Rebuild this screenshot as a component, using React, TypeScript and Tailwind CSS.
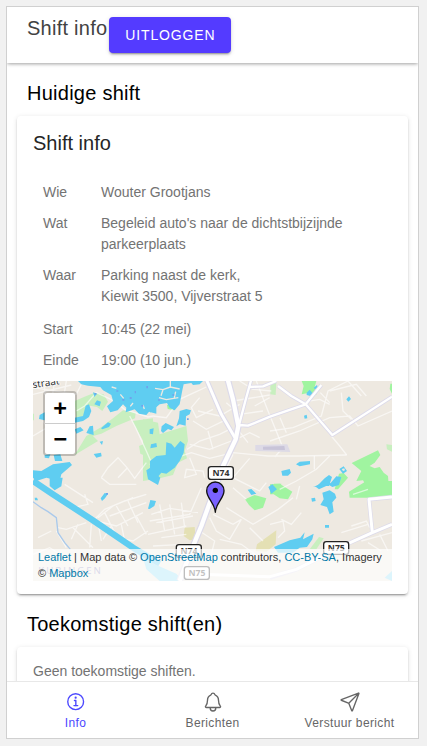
import React from "react";
import {
  IoInformationCircleOutline,
  IoNotificationsOutline,
  IoPaperPlaneOutline,
} from "react-icons/io5";

const rows: { label: string; lines: string[]; tall?: boolean }[] = [
  { label: "Wie", lines: ["Wouter Grootjans"] },
  { label: "Wat", lines: ["Begeleid auto's naar de dichtstbijzijnde parkeerplaats"] },
  { label: "Waar", lines: ["Parking naast de kerk,", "Kiewit 3500, Vijverstraat 5"], tall: true },
  { label: "Start", lines: ["10:45 (22 mei)"] },
  { label: "Einde", lines: ["19:00 (10 jun.)"] },
];

function RoadSign({ x, y, label }: { x: number; y: number; label: string }) {
  return (
    <g>
      <rect x={x} y={y} width="75" height="38" rx="8" fill="#fff" stroke="#222" strokeWidth="4" />
      <text
        x={x + 38}
        y={y + 28}
        textAnchor="middle"
        fontFamily="'Open Sans', 'Noto Sans', sans-serif"
        fontSize="26"
        fontWeight="700"
        fill="#333"
      >
        {label}
      </text>
    </g>
  );
}

function MapDrawing() {
  return (
    <svg
      viewBox="0 0 1077 600"
      preserveAspectRatio="xMidYMid slice"
      className="block h-full w-full"
      aria-hidden="true"
    >
      <rect width="1077" height="600" fill="#eee9e1" />

      {/* Parks and woods */}
      <g fill="#c8efbf">
        <path d="M125 60L160 45L185 35L212 40L225 62L208 90L192 78L170 74L150 105L130 115Z" />
        <path d="M125 222L160 165L205 138L240 112L270 88L308 96L306 112L250 135L205 158L180 165L195 180L125 222Z" />
        <path d="M298 120L360 112L360 235L322 218L318 195L335 188Z" />
        <path d="M0 98H3V118H0Z" />
        <path d="M330 115L375 125L380 160L460 135L465 180L455 210L462 232L435 245L420 282L380 292L330 300Z" />
        <path d="M712 10L730 5L728 42L712 40Z" />
        <path d="M1060 190L1077 192V212L1062 205Z" />
        <path d="M830 505L858 468L872 472L850 505Z" />
      </g>
      <g fill="#a0f4a0">
        <path d="M806 0L850 0L845 18L850 42L830 35L806 40L812 15Z" />
        <path d="M956 246L1035 208L1042 222L1025 245L1010 255L1025 262L1040 258L1052 275L1065 285L1068 325H1005L990 298L970 300L985 270Z" />
        <path d="M948 332L1000 300H1077V345L1015 350L950 350Z" />
        <path d="M918 278L932 276L945 290L915 325H905L912 300Z" />
        <path d="M636 355L665 342L700 352L690 380L665 388L648 372Z" />
        <path d="M711 310L740 308L778 332L765 355L740 352L722 340H711Z" />
        <path d="M690 485L712 474L722 488L705 500L692 498Z" />
        <path d="M402 72L422 66L424 88L404 84Z" />
        <path d="M1072 8H1077V38L1070 24Z" />
        <path d="M723 308L745 308L742 320L722 318Z" />
      </g>
      <g fill="#e4e0b4">
        <path d="M455 440L485 438L488 475L470 478L452 465Z" />
        <path d="M672 490L730 448L728 490L700 512L668 510Z" />
      </g>

      {/* Local streets */}
      <g fill="none" stroke="#fff" strokeOpacity=".6" strokeWidth="4">
        <path d="M0 20L130 40L150 0M35 0V42M65 0L58 45M100 0L92 50M0 40L115 12M130 90L155 75L190 35L240 58L275 85L345 108L360 105M0 165L42 140L30 120M290 105L308 140L340 210L360 255" />
        <path d="M205 290L225 260L255 230L282 260L305 292L340 245M255 290L282 262M205 290L230 310L310 310" />
        <path d="M360 105L400 110L440 55L490 32L520 18M500 50L475 80L490 110L540 85M480 120L520 145L575 118M462 205L500 180L560 160L590 145M495 90L560 105L620 70M470 190L530 205L595 180M525 150L540 205M580 65L620 100L690 90M620 0L660 25L715 30M600 60L710 42M620 170L650 155L680 170M610 140L645 185M665 75L710 50" />
        <path d="M350 250L400 240L475 215L530 232L600 215L705 225L800 225L941 222M470 230L490 280L455 290L460 265L510 270L515 290M600 220L570 280L545 300M650 232L600 290L680 330L700 305M725 228L750 200L705 90L670 0" />
        <path d="M711 180L800 150L890 110L950 105L975 135L1077 90M711 150L780 140L865 105L885 30L945 0M925 35L930 90L955 115M890 30L970 10L1000 45M760 155L741 110M800 65L860 55L890 70M862 35L890 65M895 165L920 195L941 222M844 224V265M890 225L850 265L790 300L740 325M945 0L985 45" />
        <path d="M95 310L180 365M155 340L165 370L120 380M180 420L215 385L275 360L340 340M195 410L240 375L300 350M190 420L250 435L330 395M215 395L245 455M250 375L285 435M285 360L315 425M230 405L340 365M235 435L210 475M265 430L275 480M310 405L340 460M160 425L100 445L75 440M120 440L150 470L180 500M135 430L115 475M175 430L170 500M70 450L100 500M15 470L55 450M250 470L300 480L345 450M195 425L205 480M0 520L50 500L90 525" />
        <path d="M355 400L410 382L495 395M370 425L480 405M380 370L395 450M410 370L425 460M445 365L455 440M345 460L460 435M385 470L460 460M360 495L450 490M540 400L600 430L625 415L590 475L550 450L530 410M580 380L660 430L735 385L780 350M650 440L690 480M560 475L625 490L680 530M500 450L545 480L535 520M600 320L640 355M505 320L470 400L350 420" />
        <path d="M745 415L775 430L805 395M711 430L750 420L755 450L735 470M800 315L790 355M955 435L1000 420L1010 440M925 455L1005 430M985 480L1077 455M1005 485L1045 510M1040 460L1065 510M960 340L1005 325" />
      </g>

      {/* Airstrip */}
      <path d="M667 192L763 190L772 213L667 210Z" fill="#dddae6" />
      <path d="M690 197L754 195L756 207L690 206Z" fill="#c8c4d8" />

      {/* Canal and river */}
      <path d="M0 300L60 340L180 418L300 500L380 548" fill="none" stroke="#5fcdf1" strokeWidth="19" />
      <path d="M0 362L25 380L45 392L70 410L75 455L95 485L112 505" fill="none" stroke="#a9c9eb" strokeWidth="4" />
      <path d="M330 530L365 550L430 578L450 600H380L340 565Z" fill="#8edcf5" />
      <path d="M1055 590L1077 570V600Z" fill="#8edcf5" />

      {/* Lakes and ponds */}
      <g fill="#5fcdf1">
        <path d="M135 0H370V98L348 92L340 102L318 98L305 85L278 94L280 80L270 70L254 88L232 94L222 76L240 60L235 42L210 28L202 18L165 14L145 10Z" />
        <path d="M180 34L192 38L184 48ZM192 58L204 62L200 76L184 70ZM158 74L168 70L175 90L168 108L150 120L125 125V110L150 105ZM20 102L35 94V118L18 114ZM170 136L180 134L182 162L160 156ZM125 145L142 138L152 148L130 158ZM204 142L225 124L234 128L228 138L208 145ZM200 182L210 180L207 192ZM182 219L204 215L206 226L190 230ZM0 268L25 270L60 250L110 243L117 252L85 280L80 300L40 290L10 300L0 290ZM62 222L82 220L88 240L66 240ZM35 222L52 220L48 232L35 230Z" />
        <path d="M350 145L362 142L360 160L350 158ZM340 268L360 255L365 275L382 290L375 312L345 295Z" />
        <path d="M366 0H510L500 10L480 12L475 6L452 10L448 28L440 70L425 88L410 80L402 66L380 70L351 95ZM440 90L460 84L474 88L470 100L459 106L458 134L440 130L430 136L438 112ZM386 136L398 126L423 138L415 148L405 144L390 156L384 150ZM400 184L415 188L425 200L442 180L455 190L452 215L440 240L425 260L400 278L385 275L366 298L351 280L351 240L370 225L398 222ZM354 190L370 186L372 198L352 202Z" />
        <path d="M821 35L830 26L840 38L832 45L821 42ZM842 20L852 12L855 20L846 25ZM813 104L821 101L823 112L815 113ZM940 55L948 46L954 54L946 62ZM789 250L800 242L831 240V250L800 256ZM745 270L770 264L774 275L765 284H748ZM850 317L875 292L888 282L897 288L888 315H840ZM888 312L910 286L925 288L918 312L898 318ZM919 264L932 256L942 270L930 278Z" />
        <path d="M50 290L89 290L85 316L65 328L50 315ZM203 352L215 336L225 338L216 352L207 360ZM5 350L12 350L15 358L6 358Z" />
        <path d="M345 383L352 357L369 360L364 375L350 384ZM644 326L655 324L670 338L655 342ZM706 318L718 310L732 325L715 338Z" />
        <path d="M846 316L880 300L895 308L878 316L858 325ZM868 335L890 328L906 338L910 350L898 364L902 392L890 400L882 378L862 372L872 355ZM835 352L846 350L848 360L837 362ZM876 432H888V440H876ZM723 498L770 478L802 470L815 454L810 475L842 458L838 475L822 498L800 500L780 515H735Z" />
      </g>
      <path d="M926 264L934 262L936 268L930 270Z" fill="#eee9e1" />
      <g fill="none" stroke="#eee9e1" strokeWidth="4">
        <path d="M366 22L390 26L412 18L440 24M378 50L400 56L436 50M412 0V18M390 26L384 44M428 32L424 50" />
        <path d="M262 40L272 52M292 76L300 66M330 72L334 84M236 18L250 22" />
      </g>
      <g fill="#6fa2ec">
        <path d="M290 48h6v6h-6zM340 15h5v7h-5zM325 72h6v5h-6zM250 28h6v4h-6zM305 30h4v7h-4zM268 54h6v5h-6zM185 36h5v5h-5zM219 336h6v5h-6zM375 55h6v4h-6zM418 40h6v4h-6zM462 112h5v5h-5z" />
      </g>

      {/* Main roads */}
      <g fill="none" stroke="#dcdaea" strokeLinejoin="round">
        <path d="M584 -5L600 55L616 135L608 175L570 255L505 435L472 515L440 600" strokeWidth="20" />
        <path d="M520 -5L535 30L565 100L606 170" strokeWidth="15" />
        <path d="M616 140L637 60L655 -5M618 132L645 134L711 107L818 70L865 12M735 15L775 45L818 70L898 162L1077 47M650 18L690 16L730 0" strokeWidth="12" />
        <path d="M711 590L790 565L940 490L1018 455L1077 430M1018 455L1008 355L1077 348" strokeWidth="13" />
      </g>
      <g fill="none" stroke="#fff" strokeLinejoin="round">
        <path d="M584 -5L600 55L616 135L608 175L570 255L505 435L472 515L440 600" strokeWidth="13" />
        <path d="M520 -5L535 30L565 100L606 170" strokeWidth="9" />
        <path d="M616 140L637 60L655 -5M618 132L645 134L711 107L818 70L865 12M735 15L775 45L818 70L898 162L1077 47M650 18L690 16L730 0" strokeWidth="7" />
        <path d="M500 580L711 587L790 565L940 490L1018 455L1077 430M1018 455L1008 355L1077 348" strokeWidth="9" />
      </g>

      <text
        x="0"
        y="22"
        transform="rotate(-9 0 22)"
        fontFamily="'Open Sans', 'Noto Sans', sans-serif"
        fontSize="30"
        fill="#222"
        stroke="#fff"
        strokeWidth="4"
        paintOrder="stroke"
      >
        straat
      </text>
      <text
        x="16"
        y="580"
        fontFamily="'Open Sans', 'Noto Sans', sans-serif"
        fontSize="29"
        letterSpacing="6"
        fill="#8583b8"
      >
        KURINGEN
      </text>
      <RoadSign x={526} y={257} label="N74" />
      <RoadSign x={430} y={491} label="N74" />
      <RoadSign x={454} y={557} label="N75" />
      <RoadSign x={872} y={482} label="N75" />

      {/* Location pin */}
      <path
        d="M547 394C546 365 521 353 521 329A26 26 0 0 1 573 329C573 353 548 365 547 394Z"
        fill="#7a62ff"
        stroke="#111"
        strokeWidth="4"
        strokeLinejoin="round"
      />
      <circle cx="547" cy="328" r="8" fill="#000" />
    </svg>
  );
}

function LocationMap() {
  return (
    <div className="relative h-[200px] overflow-hidden bg-[#eee9e1]">
      <MapDrawing />
      <div className="absolute left-[10px] top-[10px] flex flex-col rounded-sm border-2 border-black/20 bg-white bg-clip-padding font-['DejaVu_Sans_Mono',monospace] text-[22px] font-bold leading-[30px] text-black">
        <button type="button" aria-label="Inzoomen" className="h-[31px] w-[30px] border-b border-[#ccc]">
          +
        </button>
        <button type="button" aria-label="Uitzoomen" className="h-[30px] w-[30px]">
          −
        </button>
      </div>
      <div className="absolute bottom-0 right-0 bg-white/70 px-[5px] text-[11px] leading-4 text-[#333]">
        <a href="#leaflet" className="text-[#0078a8]">Leaflet</a> | Map data ©{" "}
        <a href="#osm" className="text-[#0078a8]">OpenStreetMap</a> contributors,{" "}
        <a href="#license" className="text-[#0078a8]">CC-BY-SA</a>, Imagery ©{" "}
        <a href="#mapbox" className="text-[#0078a8]">Mapbox</a>
      </div>
    </div>
  );
}

const cardClass =
  "mx-[10px] rounded bg-white px-4 shadow-[0_3px_1px_-2px_rgba(0,0,0,0.2),0_2px_2px_0_rgba(0,0,0,0.14),0_1px_5px_0_rgba(0,0,0,0.12)]";

const tabs = [
  { label: "Info", Icon: IoInformationCircleOutline, active: true },
  { label: "Berichten", Icon: IoNotificationsOutline, active: false },
  { label: "Verstuur bericht", Icon: IoPaperPlaneOutline, active: false },
];

export default function App() {
  return (
    <div className="h-screen bg-[#f1f1f1] pb-[7px] pl-[6px] pr-2 pt-[6px] font-['Liberation_Sans',Arial,sans-serif]">
      <div className="flex h-full flex-col overflow-hidden border border-[#d0d0d0] bg-white">
        <header className="relative z-10 flex h-14 shrink-0 items-center gap-[2px] bg-white px-5 shadow-[0_2px_4px_-1px_rgba(0,0,0,0.2),0_1px_3px_0_rgba(0,0,0,0.2)]">
          <h1 className="pb-[14px] text-xl tracking-[0.0125em] text-[#424242]">Shift info</h1>
          <button
            type="button"
            className="h-9 rounded bg-[#543bff] px-4 text-sm uppercase tracking-[0.06em] text-white shadow-[0_3px_1px_-2px_rgba(0,0,0,0.2),0_2px_2px_0_rgba(0,0,0,0.14),0_1px_5px_0_rgba(0,0,0,0.12)]"
          >
            Uitloggen
          </button>
        </header>

        <main className="min-h-0 flex-1 overflow-y-auto [scrollbar-width:none]">
          <h2 className="px-5 pb-[9px] pt-4 text-xl tracking-[0.0125em] text-black">Huidige shift</h2>
          <section className={`${cardClass} pb-[13px] pt-[13px]`}>
            <h3 className="text-xl text-[#262626]">Shift info</h3>
            <table className="mb-[5px] mt-5 w-full border-collapse text-left text-sm leading-[21px] text-[#737373]">
              <tbody>
                {rows.map((row) => (
                  <tr key={row.label} className="align-top">
                    <th scope="row" className="w-[58px] px-[10px] py-[5px] font-normal">
                      {row.label}
                    </th>
                    <td className={row.tall ? "px-[10px] pb-[7px] pt-[5px]" : "px-[10px] py-[5px]"}>
                      {row.lines.map((line) => (
                        <div key={line}>{line}</div>
                      ))}
                    </td>
                  </tr>
                ))}
              </tbody>
            </table>
            <LocationMap />
          </section>

          <h2 className="px-5 pb-[9px] pt-4 text-xl tracking-[0.0125em] text-black">Toekomstige shift(en)</h2>
          <section className={`${cardClass} mb-[10px] py-[14px]`}>
            <p className="text-sm leading-[21px] text-[#737373]">Geen toekomstige shiften.</p>
          </section>
        </main>

        <nav className="relative z-10 grid h-[57px] shrink-0 grid-cols-3 border-t border-[#e8e8e8] bg-white">
          {tabs.map(({ label, Icon, active }) => (
            <button
              key={label}
              type="button"
              aria-current={active ? "page" : undefined}
              className={`flex flex-col items-center justify-center gap-[2px] pt-px text-xs tracking-[0.03em] ${
                active ? "text-[#4c48ff]" : "text-[#666666]"
              }`}
            >
              <Icon className="size-[22px]" />
              {label}
            </button>
          ))}
        </nav>
      </div>
    </div>
  );
}
